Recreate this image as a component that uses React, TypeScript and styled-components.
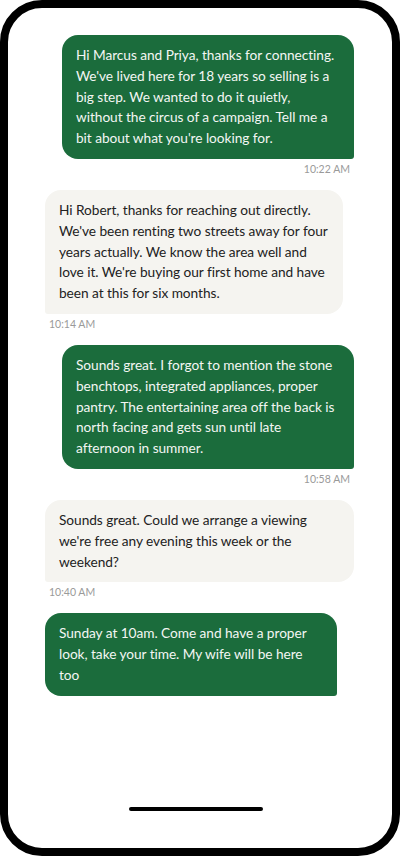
import React from 'react'
import styled, { createGlobalStyle } from 'styled-components'

const GlobalStyle = createGlobalStyle`
  html, body {
    margin: 0;
    padding: 0;
    background: #ffffff;
  }
  * {
    box-sizing: border-box;
  }
`

const Phone = styled.div`
  width: 400px;
  height: 856px;
  border: 8px solid #000;
  border-radius: 42px;
  background: #fff;
  display: flex;
  flex-direction: column;
  overflow: hidden;
  font-family: Lato, 'Noto Sans', sans-serif;
`

const Thread = styled.div`
  flex: 1;
  display: flex;
  flex-direction: column;
  gap: 14px;
  padding: 27px 38px 0 37px;
`

const MessageGroup = styled.div<{ $side: 'left' | 'right' }>`
  display: flex;
  flex-direction: column;
  align-items: ${({ $side }) => ($side === 'right' ? 'flex-end' : 'flex-start')};
`

// lines are kept as in the chat so the wrapping stays the same
const Bubble = styled.div<{ $sent: boolean; $width: number }>`
  width: ${({ $width }) => $width}px;
  padding: 10px 14px;
  font-size: 13.7px;
  line-height: 20.8px;
  letter-spacing: -0.05px;
  white-space: pre;
  background: ${({ $sent }) => ($sent ? '#1b6c3c' : '#f5f4f0')};
  color: ${({ $sent }) => ($sent ? '#f3f6f3' : '#222222')};
  border-radius: ${({ $sent }) => ($sent ? '16px 16px 3px 16px' : '16px 16px 16px 3px')};
`

const Time = styled.div`
  margin-top: 4px;
  padding: 0 4px;
  font-size: 10.5px;
  line-height: 13px;
  color: #9a9a9a;
`

const HomeBar = styled.div`
  width: 134px;
  height: 4px;
  border-radius: 2px;
  background: #000;
  margin: 0 0 37px 121px;
`

type Message = {
  lines: string[]
  time?: string
  sent: boolean
  side: 'left' | 'right'
  width: number
}

const messages: Message[] = [
  {
    lines: [
      'Hi Marcus and Priya, thanks for connecting.',
      "We've lived here for 18 years so selling is a",
      'big step. We wanted to do it quietly,',
      'without the circus of a campaign. Tell me a',
      "bit about what you're looking for."
    ],
    time: '10:22 AM',
    sent: true,
    side: 'right',
    width: 292
  },
  {
    lines: [
      'Hi Robert, thanks for reaching out directly.',
      "We've been renting two streets away for four",
      'years actually. We know the area well and',
      "love it. We're buying our first home and have",
      'been at this for six months.'
    ],
    time: '10:14 AM',
    sent: false,
    side: 'left',
    width: 298
  },
  {
    lines: [
      'Sounds great. I forgot to mention the stone',
      'benchtops, integrated appliances, proper',
      'pantry. The entertaining area off the back is',
      'north facing and gets sun until late',
      'afternoon in summer.'
    ],
    time: '10:58 AM',
    sent: true,
    side: 'right',
    width: 292
  },
  {
    lines: [
      'Sounds great. Could we arrange a viewing',
      "we're free any evening this week or the",
      'weekend?'
    ],
    time: '10:40 AM',
    sent: false,
    side: 'left',
    width: 309
  },
  {
    lines: ['Sunday at 10am. Come and have a proper', 'look, take your time. My wife will be here', 'too'],
    sent: true,
    side: 'left',
    width: 292
  }
]

export default function App() {
  return (
    <>
      <GlobalStyle />
      <Phone>
        <Thread>
          {messages.map((m, i) => (
            <MessageGroup key={i} $side={m.side}>
              <Bubble $sent={m.sent} $width={m.width}>
                {m.lines.join('\n')}
              </Bubble>
              {m.time && <Time>{m.time}</Time>}
            </MessageGroup>
          ))}
        </Thread>
        <HomeBar />
      </Phone>
    </>
  )
}
